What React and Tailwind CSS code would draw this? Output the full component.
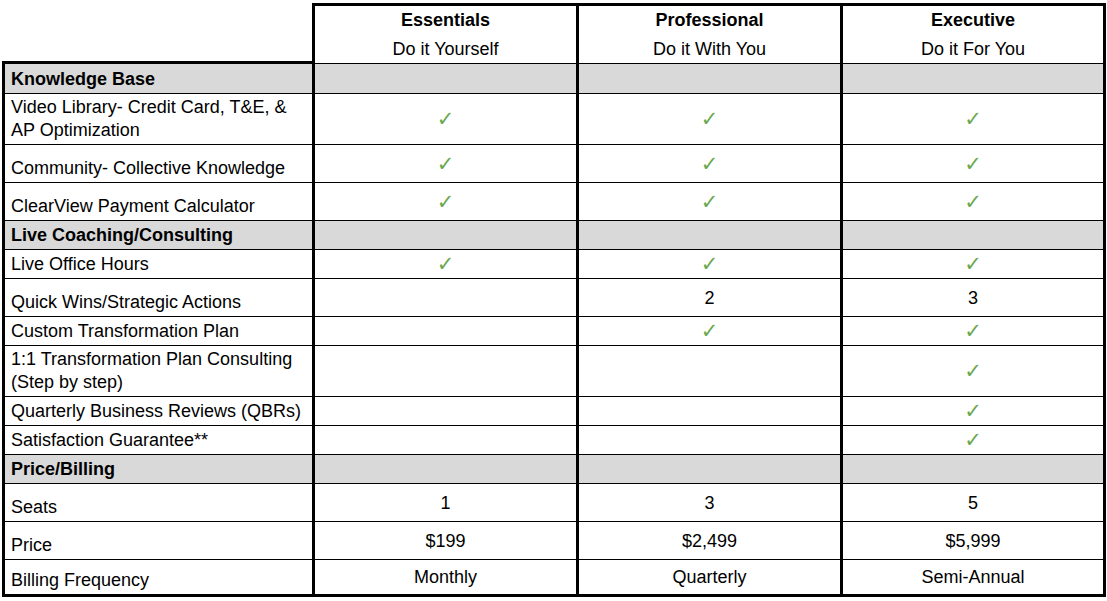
import React from "react";

const font = { fontFamily: '"Liberation Sans", Arial, sans-serif' };

const tiers = [
  { name: "Essentials", tag: "Do it Yourself" },
  { name: "Professional", tag: "Do it With You" },
  { name: "Executive", tag: "Do it For You" },
];

// "v" = check mark, "" = empty, anything else = text
const rows = [
  { section: "Knowledge Base" },
  { label: "Video Library- Credit Card, T&E, & AP Optimization", h: "h-[51px]", vals: ["v", "v", "v"] },
  { label: "Community- Collective Knowledge", h: "h-[38px]", vals: ["v", "v", "v"] },
  { label: "ClearView Payment Calculator", h: "h-[38px]", vals: ["v", "v", "v"] },
  { section: "Live Coaching/Consulting" },
  { label: "Live Office Hours", h: "h-[29px]", vals: ["v", "v", "v"] },
  { label: "Quick Wins/Strategic Actions", h: "h-[38px]", vals: ["", "2", "3"] },
  { label: "Custom Transformation Plan", h: "h-[29px]", vals: ["", "v", "v"] },
  { label: "1:1 Transformation Plan Consulting (Step by step)", h: "h-[51px]", vals: ["", "", "v"] },
  { label: "Quarterly Business Reviews (QBRs)", h: "h-[29px]", vals: ["", "", "v"] },
  { label: "Satisfaction Guarantee**", h: "h-[29px]", vals: ["", "", "v"] },
  { section: "Price/Billing" },
  { label: "Seats", h: "h-[38px]", vals: ["1", "3", "5"] },
  { label: "Price", h: "h-[38px]", vals: ["$199", "$2,499", "$5,999"] },
  { label: "Billing Frequency", h: "h-[37px]", vals: ["Monthly", "Quarterly", "Semi-Annual"], last: true },
];

const colW = ["w-[264px]", "w-[264px]", "w-[263px]"];

function Check() {
  return (
    <span
      className="text-[21px] leading-[20px] text-[#6aa84f]"
      style={{ fontFamily: '"DejaVu Sans", sans-serif' }}
    >
      ✓
    </span>
  );
}

function Row({ row, first }) {
  const gray = !!row.section;
  const h = gray ? (first ? "h-[30px]" : "h-[29px]") : row.h;
  const bb = row.last ? "border-b-[3px]" : "border-b";
  const bg = gray ? "bg-[#d9d9d9]" : "bg-white";
  return (
    <div className={`flex ${h}`}>
      <div
        className={`w-[313px] border-l-[3px] border-r-[3px] border-black ${bb} ${bg} flex items-end pl-[6px] pr-[1px] pb-[2px] leading-[23px] text-[18px] ${gray ? "font-bold" : ""}`}
      >
        <span>{row.section || row.label}</span>
      </div>
      {colW.map((w, i) => {
        const v = gray ? "" : row.vals[i];
        return (
          <div
            key={i}
            className={`${w} border-r-[3px] border-black ${bb} ${bg} flex items-center justify-center text-[18px] leading-[20px]`}
          >
            {v === "v" ? <Check /> : v}
          </div>
        );
      })}
    </div>
  );
}

export default function App() {
  return (
    <div className="w-[1107px] h-[601px] bg-white text-black pt-[3px] pl-[2px]" style={font}>
      {/* header */}
      <div className="flex h-[61px]">
        <div className="w-[310px] border-b-[3px] border-black" />
        {tiers.map((t, i) => (
          <div
            key={t.name}
            className={`${i === 0 ? "w-[267px] border-l-[3px]" : colW[i]} border-t-[3px] border-r-[3px] border-b border-black flex flex-col items-center text-[18px]`}
          >
            <div className="h-[29px] leading-[29px] font-bold">{t.name}</div>
            <div className="h-[28px] leading-[29px]">{t.tag}</div>
          </div>
        ))}
      </div>
      {rows.map((r, i) => (
        <Row key={i} row={r} first={i === 0} />
      ))}
    </div>
  );
}
